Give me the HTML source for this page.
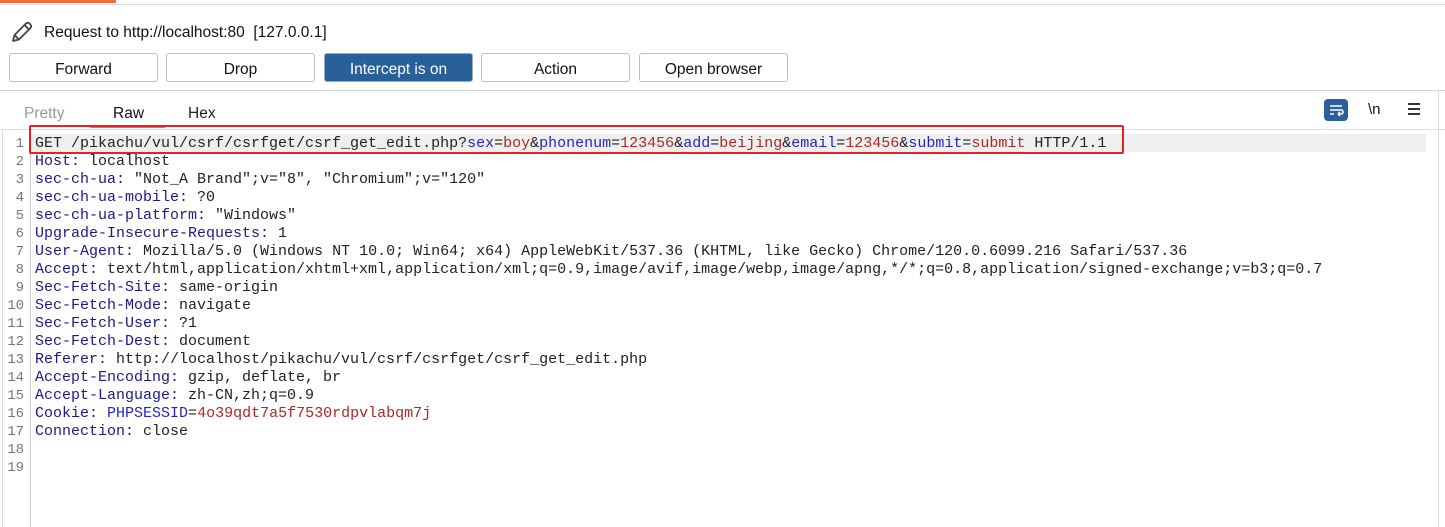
<!DOCTYPE html><html><head><style>
body{margin:0;width:1445px;height:527px;overflow:hidden;background:#fff;font-family:"Liberation Sans",sans-serif;position:relative}
.a{position:absolute}
.btn{position:absolute;top:53px;width:147px;height:27px;border:1px solid #bdbdbd;border-radius:3px;background:#fff;font-size:15.5px;text-align:center;line-height:31px;color:#111}
.code{position:absolute;left:35px;top:135px;font-family:"Liberation Mono",monospace;font-size:15px;letter-spacing:0px;line-height:18px;white-space:pre;color:#222}
.nums{position:absolute;left:0;width:24px;top:135px;font-family:"Liberation Mono",monospace;font-size:14px;line-height:18px;text-align:right;color:#777;white-space:pre}
.k{color:#1a1a8a}.p{color:#2424c8}.v{color:#b02626}
</style></head><body>
<div class="a" style="left:0;top:0;width:116px;height:3px;background:#f26d3d"></div>
<div class="a" style="left:0;top:4px;width:1445px;height:1px;background:#ddd"></div>
<svg class="a" style="left:9px;top:20px" width="26" height="26" viewBox="0 0 26 26"><path d="M4 21 L5.5 15 L17 3.5 Q19 2 21 4 Q23 6 21.5 8 L10 19.5 Z M5.5 15 L10 19.5 M15.5 5 L20 9.5" fill="none" stroke="#444" stroke-width="1.8" stroke-linejoin="round"/></svg>
<div class="a" style="left:44px;top:24px;font-size:15.5px;color:#111">Request to http://localhost:80&nbsp; [127.0.0.1]</div>
<div class="btn" style="left:9px">Forward</div>
<div class="btn" style="left:166px">Drop</div>
<div class="btn" style="left:324px;background:#2a6099;border-color:#9ab;color:#fff">Intercept is on</div>
<div class="btn" style="left:481px">Action</div>
<div class="btn" style="left:639px">Open browser</div>
<div class="a" style="left:0;top:90px;width:1445px;height:1px;background:#d6d6d6"></div>
<div class="a" style="left:24px;top:105px;font-size:15.5px;color:#999">Pretty</div>
<div class="a" style="left:113px;top:105px;font-size:15.5px;color:#111">Raw</div>
<div class="a" style="left:188px;top:105px;font-size:15.5px;color:#222">Hex</div>
<div class="a" style="left:90px;top:125px;width:75px;height:3px;background:#f26d3d"></div>
<div class="a" style="left:0;top:129px;width:1445px;height:1px;background:#ddd"></div>
<div class="a" style="left:1324px;top:99px;width:24px;height:22px;background:#2a6099;border-radius:4px"></div>
<svg class="a" style="left:1324px;top:99px" width="24" height="22"><path d="M6 7h12M6 11h11q2 0 2 2t-2 2h-3M6 15h4M14 15l2-2M14 15l2 2" stroke="#fff" stroke-width="1.5" fill="none"/></svg>
<div class="a" style="left:1368px;top:101px;font-size:15px;color:#111">\n</div>
<div class="a" style="left:1408px;top:103px;width:12px;height:2px;background:#333;box-shadow:0 5px 0 #333,0 10px 0 #333"></div>
<div class="a" style="left:1438px;top:90px;width:1px;height:437px;background:#ddd"></div>
<div class="a" style="left:2px;top:130px;width:1px;height:397px;background:#ddd"></div>
<div class="a" style="left:30px;top:130px;width:1px;height:397px;background:#ccc"></div>
<div class="a" style="left:31px;top:134px;width:1395px;height:18px;background:#efefef"></div>
<div class="a" style="left:29px;top:125px;width:1091px;height:25px;border:2px solid #e82020;border-radius:2px"></div>
<div class="nums">1
2
3
4
5
6
7
8
9
10
11
12
13
14
15
16
17
18
19</div>
<div class="code">GET /pikachu/vul/csrf/csrfget/csrf_get_edit.php?<span class="p">sex</span>=<span class="v">boy</span>&amp;<span class="p">phonenum</span>=<span class="v">123456</span>&amp;<span class="p">add</span>=<span class="v">beijing</span>&amp;<span class="p">email</span>=<span class="v">123456</span>&amp;<span class="p">submit</span>=<span class="v">submit</span> HTTP/1.1
<span class="k">Host:</span> localhost
<span class="k">sec-ch-ua:</span> "Not_A Brand";v="8", "Chromium";v="120"
<span class="k">sec-ch-ua-mobile:</span> ?0
<span class="k">sec-ch-ua-platform:</span> "Windows"
<span class="k">Upgrade-Insecure-Requests:</span> 1
<span class="k">User-Agent:</span> Mozilla/5.0 (Windows NT 10.0; Win64; x64) AppleWebKit/537.36 (KHTML, like Gecko) Chrome/120.0.6099.216 Safari/537.36
<span class="k">Accept:</span> text/html,application/xhtml+xml,application/xml;q=0.9,image/avif,image/webp,image/apng,*/*;q=0.8,application/signed-exchange;v=b3;q=0.7
<span class="k">Sec-Fetch-Site:</span> same-origin
<span class="k">Sec-Fetch-Mode:</span> navigate
<span class="k">Sec-Fetch-User:</span> ?1
<span class="k">Sec-Fetch-Dest:</span> document
<span class="k">Referer:</span> http://localhost/pikachu/vul/csrf/csrfget/csrf_get_edit.php
<span class="k">Accept-Encoding:</span> gzip, deflate, br
<span class="k">Accept-Language:</span> zh-CN,zh;q=0.9
<span class="k">Cookie:</span> <span class="p">PHPSESSID</span>=<span class="v">4o39qdt7a5f7530rdpvlabqm7j</span>
<span class="k">Connection:</span> close</div>
</body></html>
